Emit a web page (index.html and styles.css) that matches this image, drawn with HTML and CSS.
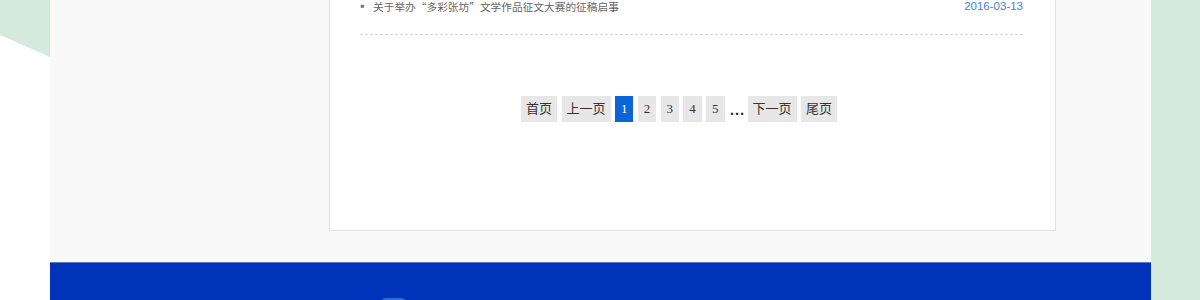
FILE: index.html
```html
<!DOCTYPE html>
<html lang="zh-CN">
<head>
<meta charset="utf-8">
<title>列表</title>
<link rel="stylesheet" href="styles.css">
</head>
<body>
<div class="page">
  <div class="side-left"><div class="leaf"></div></div>
  <div class="center">
    <div class="main">
      <div class="box">
        <ul class="news">
          <li class="news-item">
            <span class="dot">•</span>
            <a class="title">关于举办“多彩张坊”文学作品征文大赛的征稿启事</a>
            <span class="date">2016-03-13</span>
          </li>
        </ul>
        <div class="pager">
          <a class="pg pg-word">首页</a>
          <a class="pg pg-word">上一页</a>
          <a class="pg pg-num active">1</a>
          <a class="pg pg-num">2</a>
          <a class="pg pg-num">3</a>
          <a class="pg pg-num">4</a>
          <a class="pg pg-num">5</a>
          <span class="ellipsis">…</span>
          <a class="pg pg-word">下一页</a>
          <a class="pg pg-word">尾页</a>
        </div>
      </div>
    </div>
    <div class="footer">
      <div class="footer-logo"></div>
    </div>
  </div>
  <div class="side-right"></div>
</div>
</body>
</html>
```

FILE: styles.css
```css
html, body {
  margin: 0;
  padding: 0;
  background: #ffffff;
  height: 300px;
  overflow: hidden;
}
.page {
  display: grid;
  grid-template-columns: 50px 1101px 49px;
  height: 300px;
}
.side-left {
  position: relative;
}
.leaf {
  height: 100%;
  background: #d4eadc;
  clip-path: polygon(0 0, 100% 0, 100% 57px, 0 35px);
}
.side-right {
  background: #d4eadc;
}
.center {
  background: #f9f9f9;
  display: flex;
  flex-direction: column;
}
.main {
  padding-left: 279px;
  height: 262px;
  box-sizing: border-box;
}
.box {
  display: flow-root;
  width: 727px;
  box-sizing: border-box;
  background: #ffffff;
  border: 1px solid #e2e2e2;
  border-top: none;
  height: 231px;
  padding: 0 32px 0 30px;
}
.news {
  list-style: none;
  margin: -10px 0 0 0;
  padding: 0;
}
.news-item {
  display: flex;
  align-items: center;
  height: 32px;
  padding-bottom: 12px;
  border-bottom: 1px dashed #d4d4d4;
  font-family: "Noto Sans CJK SC", "Liberation Sans", sans-serif;
  font-size: 10.7px;
  color: #666666;
}
.dot {
  width: 13px;
  font-family: "Liberation Sans", sans-serif;
  font-size: 13px;
  color: #777777;
}
.title {
  flex: 1;
  color: #666666;
}
.date {
  font-family: "Liberation Sans", sans-serif;
  font-size: 11.5px;
  color: #3d82dd;
}
.pager {
  display: flex;
  align-items: center;
  gap: 4.5px;
  margin-top: 59px;
  padding-left: 161px;
  font-family: "Liberation Serif", "Noto Sans CJK SC", serif;
  font-size: 13px;
}
.pg {
  height: 26px;
  line-height: 26px;
  background: #e7e7e7;
  color: #333333;
  text-align: center;
  box-sizing: border-box;
}
.pg-word {
  padding: 0 5px;
}
.pg-num {
  width: 18.3px;
}
.pg.active {
  background: #0a66d8;
  color: #ffffff;
}
.ellipsis {
  width: 16px;
  margin-right: -2px;
  text-align: center;
  font-size: 15px;
  font-weight: bold;
  color: #222222;
  line-height: 26px;
  padding-top: 3px;
}
.footer {
  flex: 1;
  background: #0033b9;
  border-top: 1px solid #5a79c8;
  padding-left: 330px;
}
.footer-logo {
  margin-top: 35px;
  width: 27px;
  height: 10px;
  border-radius: 6px 6px 0 0;
  background: #2a6fd2;
}
```
